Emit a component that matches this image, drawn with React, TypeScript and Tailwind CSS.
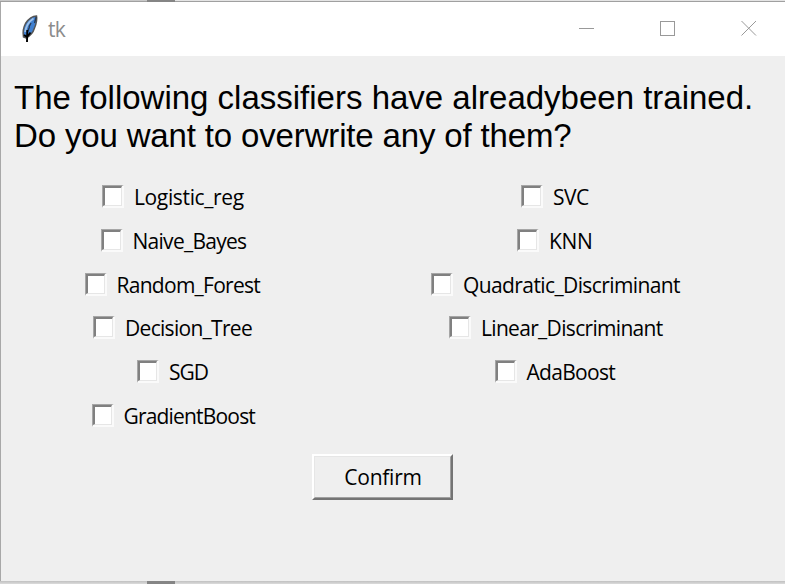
type Item = { name: string; nudge: string; tracking: string };

const left: Item[] = [
  { name: "Logistic_reg", nudge: "ml-[102px]", tracking: "tracking-[-0.36px]" },
  { name: "Naive_Bayes", nudge: "ml-[100.5px]", tracking: "tracking-[-0.72px]" },
  { name: "Random_Forest", nudge: "ml-[84.5px]", tracking: "tracking-[-0.72px]" },
  { name: "Decision_Tree", nudge: "ml-[93px]", tracking: "tracking-[-0.7px]" },
  { name: "SGD", nudge: "ml-[137px]", tracking: "tracking-[-1px]" },
  { name: "GradientBoost", nudge: "ml-[91.5px]", tracking: "tracking-[-0.82px]" },
];

const right: Item[] = [
  { name: "SVC", nudge: "ml-[121px]", tracking: "tracking-[-0.5px]" },
  { name: "KNN", nudge: "ml-[117px]", tracking: "tracking-[-0.3px]" },
  { name: "Quadratic_Discriminant", nudge: "ml-[31px]", tracking: "tracking-[-0.6px]" },
  { name: "Linear_Discriminant", nudge: "ml-[49px]", tracking: "tracking-[-0.68px]" },
  { name: "AdaBoost", nudge: "ml-[94.5px]", tracking: "tracking-[-0.7px]" },
];

function Check({ item }: { item: Item }) {
  return (
    <label className={"flex h-[43.8px] items-start whitespace-nowrap " + item.nudge}>
      <span className="mt-[8px] h-[23px] w-[22px] shrink-0 border border-r-2 border-b-2 border-t-[#a6a6a6] border-l-[#a6a6a6] border-r-[#fafafa] border-b-[#fafafa]">
        <span className="block h-[20px] w-[19px] border border-t-2 border-l-2 border-t-[#808080] border-l-[#808080] border-r-[#e6e6e6] border-b-[#e6e6e6] bg-white" />
      </span>
      <span className={"ml-[10px] mt-[5px] text-[21px] leading-[30px] " + item.tracking}>{item.name}</span>
    </label>
  );
}

function Feather() {
  return (
    <svg className="ml-[20px] h-[28px] w-[18px]" viewBox="0 0 18 28">
      <path d="M15.5 1 C11.5 1 7.5 4 4.5 8.5 C2 13 1.6 17 2.5 22 L5 23 C9 21 12 18 13.5 13 C15.2 9 16.3 5 15.5 1Z" fill="#3f7fd0" stroke="#555" strokeWidth="1.5" />
      <path d="M12.5 3.5 C8 6.5 5 11 4.2 17" fill="none" stroke="#9fc3ea" strokeWidth="1.8" />
      <path d="M15.2 2 L13.5 8 M10 8 L8 12 M8.5 12 L6.5 17" fill="none" stroke="#263850" strokeWidth="1.3" />
      <path d="M6.3 15 L6 27 M3 20 L6 22 L9.5 17.5" fill="none" stroke="#000" strokeWidth="1.9" />
    </svg>
  );
}

export default function App() {
  return (
    <div className="flex h-[584px] w-[785px] flex-col overflow-hidden bg-[#efefef] font-['Open_Sans','Noto_Sans',sans-serif] text-black">
      <div className="flex h-[2px] shrink-0 border-b border-[#a0a0a0] bg-[#c8c8c8]">
        <div className="ml-[147px] h-[2px] w-[28px] bg-[#858585]" />
        <div className="h-px flex-1 bg-[#e4e4e4]" />
      </div>
      <div className="flex h-[579px] shrink-0 flex-col border-l border-[#a8a8a8]">
        <header className="flex h-[54px] shrink-0 items-center bg-white">
          <Feather />
          <span className="ml-[9px] mt-[2px] text-[21px] tracking-[-0.8px] text-[#8c8c8c]">tk</span>
          <svg className="ml-auto mr-[28px] -mt-[2px] h-[16px] w-[178px]" viewBox="0 0 178 16" fill="none" stroke="#999" shapeRendering="crispEdges">
            <path d="M0 8.5H15M81.5 1.5H95.5V15.5H81.5Z" />
            <path d="M162.5 1L177 15.5M177 1L162.5 15.5" shapeRendering="auto" />
          </svg>
        </header>
        <h1 className="ml-[13px] mt-[23px] whitespace-pre font-['Liberation_Sans',Arial,sans-serif] text-[33px] leading-[38px]">
          <span className="block">The following classifiers have alreadybeen trained.</span>
          <span className="block tracking-[-0.15px]">Do you want to overwrite any of them?</span>
        </h1>
        <div className="mt-[22px] flex h-[263px]">
          <div className="-ml-px w-[400px]">{left.map((i) => <Check key={i.name} item={i} />)}</div>
          <div className="flex-1">{right.map((i) => <Check key={i.name} item={i} />)}</div>
        </div>
        <button className="ml-[311px] mt-[14px] h-[46px] w-[141px] border-2 border-t-white border-l-white border-r-[#747474] border-b-[#747474]">
          <span className="flex h-full items-center justify-center border border-t-[#e6e6e6] border-l-[#e6e6e6] border-r-[#a0a0a0] border-b-[#a0a0a0] pt-[2px] pl-px text-[21px] tracking-[-0.25px]">Confirm</span>
        </button>
      </div>
      <div className="flex h-[3px] shrink-0 bg-gradient-to-b from-[#c0c0c0] to-[#dcdcdc]">
        <div className="ml-[147px] w-[28px] bg-[#858585]" />
      </div>
    </div>
  );
}
